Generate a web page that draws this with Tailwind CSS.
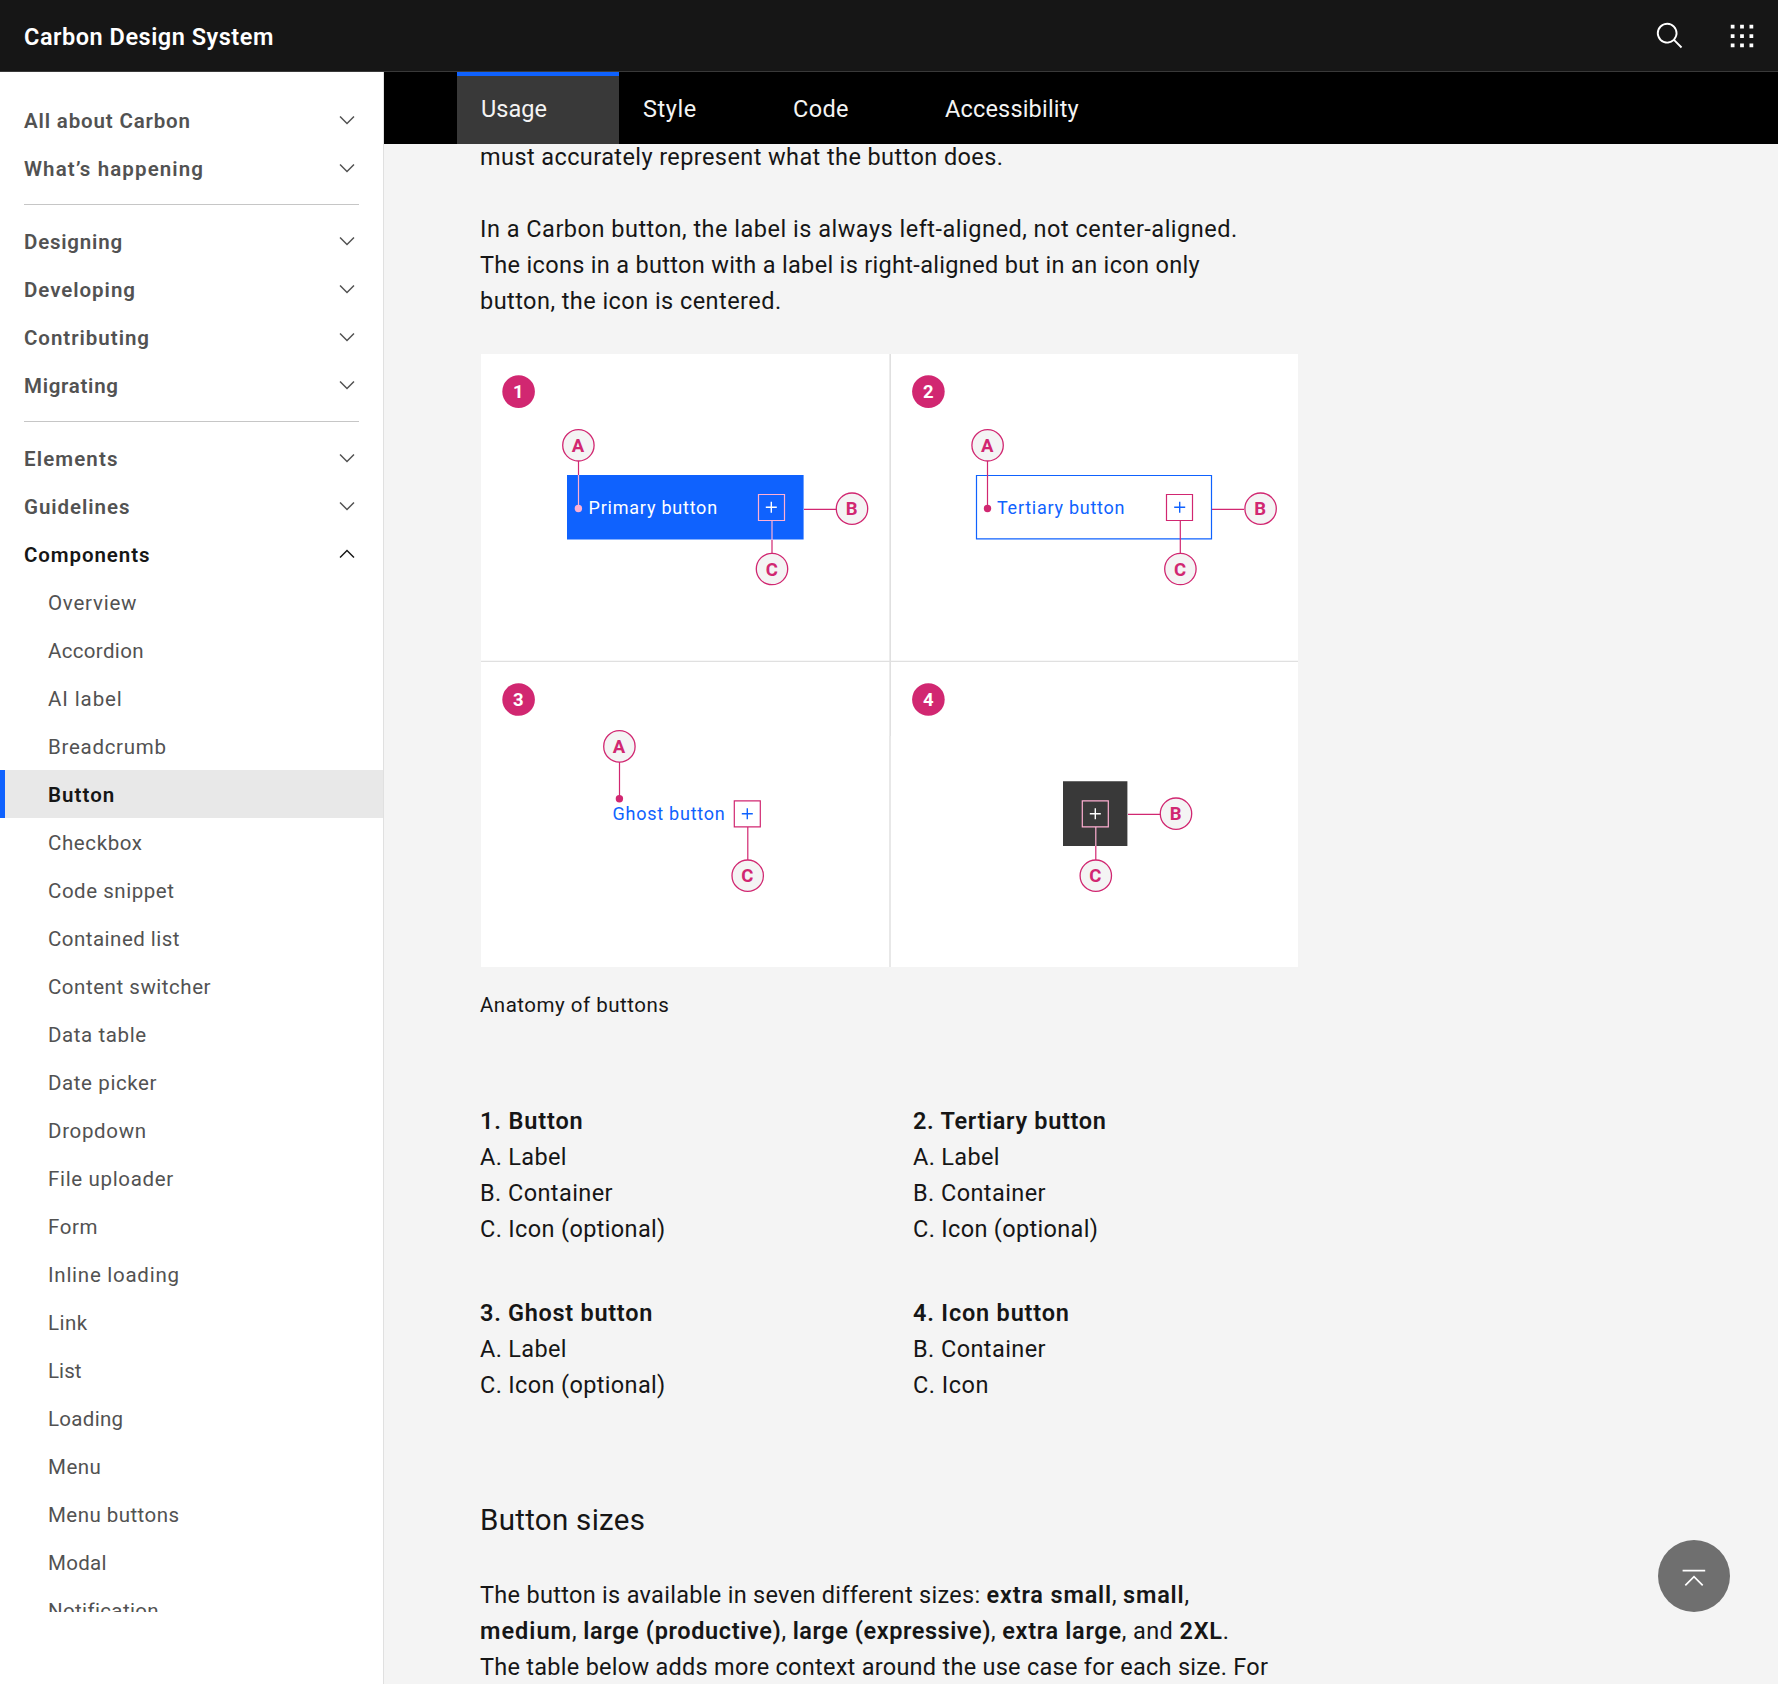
<!DOCTYPE html>
<html lang="en">
<head>
<meta charset="utf-8">
<title>Button – Carbon Design System</title>
<script src="https://cdn.jsdelivr.net/npm/@tailwindcss/browser@4"></script>
</head>
<body class="h-[1684px] overflow-hidden bg-[#f4f4f4] font-[Roboto,'Noto_Sans',sans-serif] text-[#161616]">
<svg class="hidden">
  <symbol id="chevron" viewBox="0 0 16 16"><path d="M8 11 3 6l.7-.7L8 9.6l4.3-4.3.7.7z"/></symbol>
</svg>

<header class="flex h-[72px] items-center justify-between border-b border-[#393939] bg-[#161616] pl-6 text-white">
  <a class="pt-[3px] text-[23.5px] leading-9 font-semibold tracking-[0.52px]">Carbon Design System</a>
  <div class="flex h-full items-start gap-[42px] pt-[21px] pr-[21px]">
    <svg class="size-[30px] fill-white" viewBox="0 0 32 32"><path d="M29,27.5859l-7.5521-7.5521a11.0177,11.0177,0,1,0-1.4141,1.4141L27.5859,29ZM4,13a9,9,0,1,1,9,9A9.01,9.01,0,0,1,4,13Z"/></svg>
    <svg class="size-[30px] fill-white" viewBox="0 0 32 32"><path d="M14 4h4v4h-4zM4 4h4v4H4zM24 4h4v4h-4zM14 14h4v4h-4zM4 14h4v4H4zM24 14h4v4h-4zM14 24h4v4h-4zM4 24h4v4H4zM24 24h4v4h-4z"/></svg>
  </div>
</header>

<div class="flex h-[1612px]">
  <aside class="w-96 shrink-0 border-r border-[#e0e0e0] bg-white">
    <nav class="h-[1540px] overflow-hidden pt-6 text-[20.5px] whitespace-nowrap text-[#525252]">
      <div class="px-6 font-semibold [&_svg]:mb-0.5 [&>a]:pt-0.5">
        <a class="flex h-12 items-center justify-between tracking-[0.84px]">All about Carbon<svg class="size-6 fill-current"><use href="#chevron"/></svg></a>
        <a class="flex h-12 items-center justify-between tracking-[1.11px]">What’s happening<svg class="size-6 fill-current"><use href="#chevron"/></svg></a>
        <div class="my-3 h-px bg-[#c6c6c6]"></div>
        <a class="flex h-12 items-center justify-between tracking-[0.78px]">Designing<svg class="size-6 fill-current"><use href="#chevron"/></svg></a>
        <a class="flex h-12 items-center justify-between tracking-[0.96px]">Developing<svg class="size-6 fill-current"><use href="#chevron"/></svg></a>
        <a class="flex h-12 items-center justify-between tracking-[0.97px]">Contributing<svg class="size-6 fill-current"><use href="#chevron"/></svg></a>
        <a class="flex h-12 items-center justify-between tracking-[0.71px]">Migrating<svg class="size-6 fill-current"><use href="#chevron"/></svg></a>
        <div class="my-3 h-px bg-[#c6c6c6]"></div>
        <a class="flex h-12 items-center justify-between tracking-[1.12px]">Elements<svg class="size-6 fill-current"><use href="#chevron"/></svg></a>
        <a class="flex h-12 items-center justify-between tracking-[0.95px]">Guidelines<svg class="size-6 fill-current"><use href="#chevron"/></svg></a>
        <a class="flex h-12 items-center justify-between tracking-[0.91px] text-[#161616]">Components<svg class="size-6 rotate-180 fill-current"><use href="#chevron"/></svg></a>
      </div>
      <div class="leading-[46px] [&>a]:pt-0.5">
        <a class="block pl-12 tracking-[0.77px]">Overview</a>
        <a class="block pl-12 tracking-[0.33px]">Accordion</a>
        <a class="block pl-12 tracking-[0.9px]">AI label</a>
        <a class="block pl-12 tracking-[0.71px]">Breadcrumb</a>
        <a class="block border-l-[5px] border-[#0f62fe] bg-[#e8e8e8] pl-[43px] font-semibold tracking-[1.05px] text-[#161616]">Button</a>
        <a class="block pl-12 tracking-[0.6px]">Checkbox</a>
        <a class="block pl-12 tracking-[0.54px]">Code snippet</a>
        <a class="block pl-12 tracking-[0.48px]">Contained list</a>
        <a class="block pl-12 tracking-[0.53px]">Content switcher</a>
        <a class="block pl-12 tracking-[0.6px]">Data table</a>
        <a class="block pl-12 tracking-[0.6px]">Date picker</a>
        <a class="block pl-12 tracking-[0.68px]">Dropdown</a>
        <a class="block pl-12 tracking-[0.66px]">File uploader</a>
        <a class="block pl-12 tracking-[0.6px]">Form</a>
        <a class="block pl-12 tracking-[0.74px]">Inline loading</a>
        <a class="block pl-12 tracking-[0.5px]">Link</a>
        <a class="block pl-12 tracking-[0.06px]">List</a>
        <a class="block pl-12 tracking-[0.3px]">Loading</a>
        <a class="block pl-12 tracking-[0.5px]">Menu</a>
        <a class="block pl-12 tracking-[0.45px]">Menu buttons</a>
        <a class="block pl-12 tracking-[0.3px]">Modal</a>
        <a class="block pl-12 tracking-[0.36px]">Notification</a>
      </div>
    </nav>
  </aside>

  <main class="flex min-w-0 grow flex-col">
    <div class="flex h-[72px] shrink-0 bg-black pl-[73px] text-[23.5px] leading-[72px] text-[#f4f4f4]">
      <a class="w-[162px] border-t-4 border-[#0f62fe] bg-[#393939] pl-6 leading-[66px] tracking-[0.02px]">Usage</a>
      <a class="w-[150px] pl-6 pt-px tracking-[0.6px]">Style</a>
      <a class="w-[152px] pl-6 pt-px tracking-[0.35px]">Code</a>
      <a class="pl-6 pt-px tracking-[0.18px]">Accessibility</a>
    </div>

    <div class="min-h-0 grow overflow-hidden pl-24 text-[23.5px] leading-9 whitespace-nowrap">
      <p class="-mt-[5px] tracking-[0.41px]">must accurately represent what the button does.</p>
      <p class="mt-9"><span class="block tracking-[0.5px]">In a Carbon button, the label is always left-aligned, not center-aligned.</span><span class="block tracking-[0.32px]">The icons in a button with a label is right-aligned but in an icon only</span><span class="block tracking-[0.45px]">button, the icon is centered.</span></p>

      <!-- Anatomy diagram -->
      <svg class="mt-[35px] ml-px block h-[613px] w-[817px] bg-white" viewBox="481 354 817 613" fill="none" stroke="#d12771" stroke-width="1.2">
        <g stroke="#e0e0e0" stroke-width="1">
          <path d="M481 661.4h817" stroke-width="1.2"/>
          <path d="M890.2 354v382" stroke-width="1.6"/>
          <path d="M890 736v231" stroke="#e8e8e8" stroke-width="2"/>
        </g>

        <g stroke="none">
          <path fill="#0f62fe" d="M567 475h236.6v64.5H567z"/>
          <path fill="#393939" d="M1063 781.3h64.4V846H1063z"/>
        </g>
        <path stroke="#0f62fe" d="M976.5 475.5h235v63.3h-235z"/>

        <!-- leader lines -->
        <path d="M578.5 461v14M804 509.3h32M772 540v13M987.5 461v47M1180.3 521v32M1212 509.3h32M619.5 762v37M747.8 827v33M1128 814.3h32M1095.8 846v14"/>
        <path stroke="#ffafd2" d="M578.5 475v33M772 521v19M758.5 494.5h26v26h-26zM1095.8 827v19M1082.3 800.8h26v26h-26z"/>
        <path d="M1166.5 494.5h26v26h-26zM734.3 800.8h26v26h-26z"/>
        <g stroke="none" fill="#d12771">
          <circle cx="578.4" cy="508.5" r="3.7" fill="#ffafd2"/>
          <circle cx="987.5" cy="508.5" r="3.7"/>
          <circle cx="619.4" cy="798.8" r="3.7"/>
        </g>

        <!-- plus glyphs -->
        <g stroke-width="1.4">
          <path stroke="#fff" d="M765.8 507.3h11M771.3 501.8v11M1089.8 813.7h11M1095.3 808.2v11"/>
          <path stroke="#0f62fe" d="M1174.2 507.3h11M1179.7 501.8v11M741.8 813.7h11M747.3 808.2v11"/>
        </g>

        <g fill="#f4f4f4" stroke-width="1.3">
          <circle cx="578.4" cy="445.3" r="15.7"/><circle cx="852" cy="508.7" r="15.7"/><circle cx="772" cy="569" r="15.7"/>
          <circle cx="987.6" cy="445.3" r="15.7"/><circle cx="1260.6" cy="508.7" r="15.7"/><circle cx="1180.4" cy="569" r="15.7"/>
          <circle cx="619.4" cy="746.4" r="15.7"/><circle cx="747.7" cy="875.7" r="15.7"/>
          <circle cx="1176" cy="813.7" r="15.7"/><circle cx="1095.8" cy="875.7" r="15.7"/>
        </g>
        <g fill="#d12771" stroke="none">
          <circle cx="518.6" cy="391.6" r="16.3"/><circle cx="928.4" cy="391.6" r="16.3"/>
          <circle cx="518.6" cy="699.5" r="16.3"/><circle cx="928.4" cy="699.5" r="16.3"/>
        </g>

        <g stroke="none" class="text-[18.5px] font-bold" text-anchor="middle">
          <g fill="#d12771">
            <text x="578" y="452">A</text><text x="851.7" y="515.3">B</text><text x="771.7" y="575.7">C</text>
            <text x="987.3" y="452">A</text><text x="1260.2" y="515.3">B</text><text x="1180" y="575.7">C</text>
            <text x="619" y="753">A</text><text x="747.4" y="882.3">C</text>
            <text x="1175.6" y="820.3">B</text><text x="1095.4" y="882.3">C</text>
          </g>
          <g fill="#fff">
            <text x="518.4" y="398.3">1</text><text x="928.2" y="398.3">2</text><text x="518.4" y="706.2">3</text><text x="928.2" y="706.2">4</text>
          </g>
        </g>
        <g stroke="none" class="text-[18px]">
          <text x="588.6" y="513.8" fill="#fff" class="tracking-[0.77px]">Primary button</text>
          <text x="997" y="513.8" fill="#0f62fe" class="tracking-[0.74px]">Tertiary button</text>
          <text x="612.6" y="820" fill="#0f62fe" class="tracking-[0.74px]">Ghost button</text>
        </g>
      </svg>
      <p class="mt-[25px] text-[20.5px] leading-[27px] tracking-[0.5px]">Anatomy of buttons</p>

      <div class="mt-[84px] grid grid-cols-[433px_auto] gap-y-12">
        <div>
          <p class="font-semibold tracking-[0.85px]">1. Button</p>
          <p class="tracking-[0.33px]">A. Label</p>
          <p class="tracking-[0.42px]">B. Container</p>
          <p class="tracking-[0.35px]">C. Icon (optional)</p>
        </div>
        <div>
          <p class="font-semibold tracking-[0.67px]">2. Tertiary button</p>
          <p class="tracking-[0.33px]">A. Label</p>
          <p class="tracking-[0.42px]">B. Container</p>
          <p class="tracking-[0.33px]">C. Icon (optional)</p>
        </div>
        <div>
          <p class="font-semibold tracking-[0.7px]">3. Ghost button</p>
          <p class="tracking-[0.33px]">A. Label</p>
          <p class="tracking-[0.35px]">C. Icon (optional)</p>
        </div>
        <div>
          <p class="font-semibold tracking-[0.8px]">4. Icon button</p>
          <p class="tracking-[0.42px]">B. Container</p>
          <p class="tracking-[0.5px]">C. Icon</p>
        </div>
      </div>

      <h3 class="mt-24 text-[29.5px] leading-[42px] tracking-[0.29px]">Button sizes</h3>
      <p class="mt-9 tracking-[0.3px]">The button is available in seven different sizes: <b class="font-semibold tracking-[0.83px]">extra small</b>, <b class="font-semibold tracking-[0.83px]">small</b>,</p>
      <p class="tracking-[0.4px]"><b class="font-semibold tracking-[1px]">medium</b>, <b class="font-semibold tracking-[0.64px]">large (productive)</b>, <b class="font-semibold tracking-[0.55px]">large (expressive)</b>, <b class="font-semibold tracking-[0.68px]">extra large</b>, and <b class="font-semibold tracking-[0.8px]">2XL</b>.</p>
      <p class="tracking-[0.27px]">The table below adds more context around the use case for each size. For</p>
    </div>
  </main>
</div>

<button class="fixed top-[1540px] left-[1658px] flex size-[72px] items-center justify-center rounded-full bg-[#6f6f6f]">
  <svg class="size-6" viewBox="1682 1564 24 24" fill="none" stroke="#fff" stroke-width="1.7"><path d="M1682.6 1570.6h22.6M1685.3 1585.3l8.7-8.7 8.7 8.7"/></svg>
</button>
</body>
</html>
